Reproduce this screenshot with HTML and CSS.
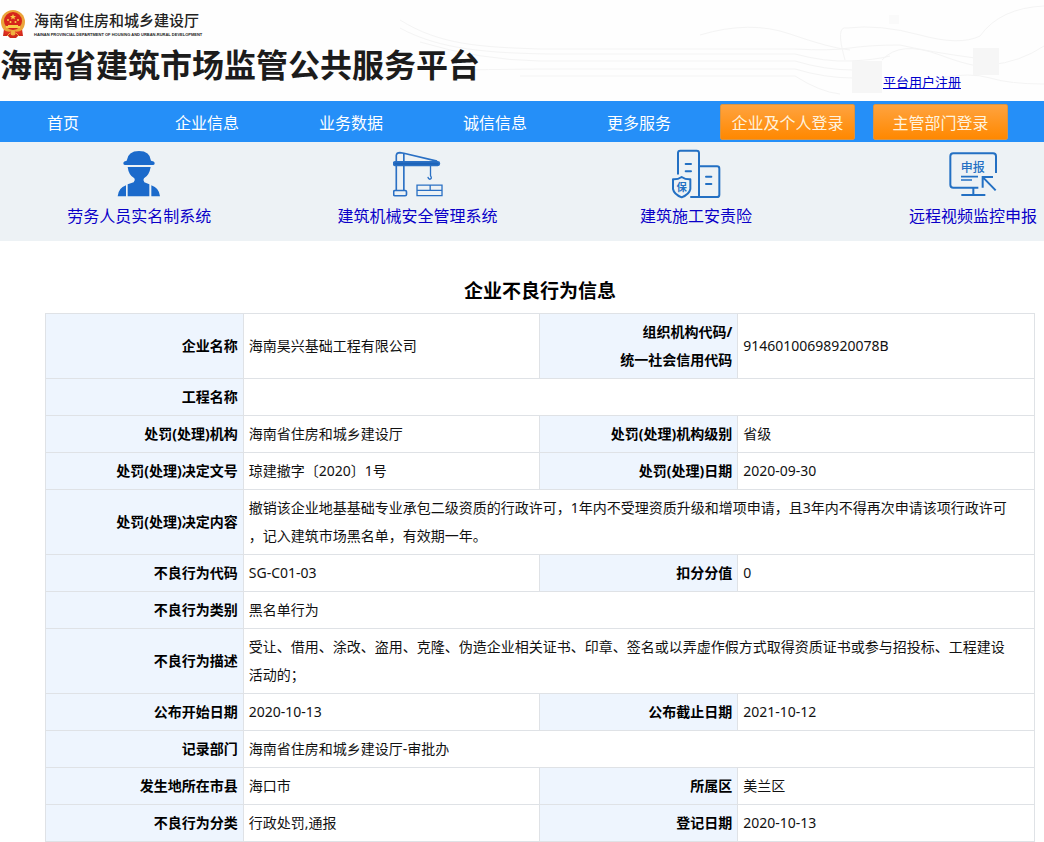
FILE: index.html
```html
<!DOCTYPE html>
<html lang="zh-CN">
<head>
<meta charset="utf-8">
<meta name="viewport" content="width=device-width, initial-scale=1">
<title>海南省建筑市场监管公共服务平台</title>
<link rel="stylesheet" href="styles.css">
</head>
<body>
<header class="header">
  <svg class="header-art" viewBox="0 0 644 101" aria-hidden="true">
    <g class="art-lines">
      <path d="M0 20C40 45 80 47 140 49H395Q430 51 450 48T500 45Q530 52 575 58"/>
      <path d="M0 28C40 50 90 53 150 54H395Q425 62 450 61T490 56"/>
      <path d="M20 42Q80 60 140 61H395Q425 70 453 70"/>
      <path d="M60 70Q120 69 160 69H395Q425 78 453 78"/>
      <path d="M120 76H395Q420 92 440 94"/>
      <path d="M300 35Q350 20 390 34T450 50"/>
      <path d="M445 60Q435 25 447 28Q480 24 520 35T580 36Q600 8 644 6"/>
      <path d="M482 60Q500 40 540 55T590 65Q620 62 644 46"/>
      <path d="M540 78Q570 72 590 78T644 84"/>
    </g>
    <rect class="art-block" x="452" y="61" width="30" height="32"/>
    <rect class="art-block" x="573" y="48" width="26" height="27"/>
    <rect class="art-faint" x="489" y="15" width="10" height="9"/>
  </svg>
  <div class="brand">
    <div class="department">
      <svg class="emblem" viewBox="0 0 26 30" role="img" aria-label="国徽">
        <path d="M4 20L3 27L8 27L10 29H16L18 27L23 27L22 20Z" fill="#cf2a1c"/>
        <circle cx="13" cy="13" r="12" fill="#eba43a"/>
        <circle cx="13" cy="12" r="9" fill="#d6261b"/>
        <path d="M13 5l.9 2h2.100l-1.700 1.400.6 2.100L13 9.300l-1.900 1.200.6-2.100L10 7h2.100z" fill="#f8cf4a"/>
        <g fill="#f8cf4a"><circle cx="8" cy="11" r="1"/><circle cx="10.500" cy="13" r="1"/><circle cx="15.500" cy="13" r="1"/><circle cx="18" cy="11" r="1"/>
        <path d="M8 16h10v1h2v2H6v-2h2z"/></g>
        <path d="M4 21Q8 24 13 22Q18 24 22 21L21 25Q17 24 13 26Q9 24 5 25Z" fill="#e33122"/>
        <circle cx="13" cy="24" r="2.500" fill="#f0b040"/>
        <path d="M7 27l3-3M19 27l-3-3" stroke="#f0b040"/>
      </svg>
      <div class="department-names">
        <span class="department-cn">海南省住房和城乡建设厅</span>
        <span class="department-en">HAINAN PROVINCIAL DEPARTMENT OF HOUSING AND URBAN-RURAL DEVELOPMENT</span>
      </div>
    </div>
    <h1 class="site-title">海南省建筑市场监管公共服务平台</h1>
  </div>
  <a class="register" href="#">平台用户注册</a>
</header>

<nav class="nav">
  <div class="nav-links">
    <a href="#">首页</a>
    <a href="#">企业信息</a>
    <a href="#">业务数据</a>
    <a href="#">诚信信息</a>
    <a href="#">更多服务</a>
  </div>
  <div class="nav-buttons">
    <button class="login" type="button">企业及个人登录</button>
    <button class="login" type="button">主管部门登录</button>
  </div>
</nav>

<section class="systems">
  <a class="system" href="#">
    <svg class="system-icon" viewBox="223 12 150 150" aria-hidden="true">
      <g fill="#1b6acb">
        <path d="M255 60Q250 58 251 53Q252 49 261 47Q265 18 298 18T334 47Q344 49 345 53Q346 58 341 60Z"/>
        <path d="M264 66H333Q329 91 313 100Q309 105 314 112L329 118V154H264V118L282 112Q288 105 284 100Q267 91 264 66Z"/>
        <path d="M259 121V154H234Q236 129 259 121ZM335 121V154H361Q359 129 335 121Z"/>
      </g>
    </svg>
    <span>劳务人员实名制系统</span>
  </a>
  <a class="system" href="#">
    <svg class="system-icon" viewBox="218 12 152 150" aria-hidden="true">
      <g fill="none" stroke="#2a70c4" stroke-width="5">
        <path d="M228 136V30Q229 22 239 22L251 24L352 48M251 24V136"/>
        <rect x="220" y="137" width="39" height="16" rx="4"/>
        <rect x="220" y="50" width="139" height="11" rx="5" fill="#1c63b8"/>
        <path stroke-width="4" d="M332 62V92Q338 102 330 103Q325 102 324 96"/>
        <path stroke-width="4" d="M291 121H367V153H291ZM291 137H367M331 121V137"/>
      </g>
    </svg>
    <span>建筑机械安全管理系统</span>
  </a>
  <a class="system" href="#">
    <svg class="system-icon" viewBox="210 12 150 150" aria-hidden="true">
      <g fill="none" stroke="#2370c3" stroke-width="6" stroke-linecap="round" stroke-linejoin="round">
        <path d="M231 86V24Q231 17 238 17H287Q294 17 294 24V156M294 64H348Q355 64 355 71V149Q355 156 348 156H270"/>
        <path d="M254 57H270M254 79H270M315 95H331M315 117H331"/>
        <path d="M242 96Q254 104 268 103V132Q265 148 242 157Q219 148 216 132V103Q230 104 242 96Z"/>
      </g>
      <text class="icon-text" x="242" y="137" font-size="31" font-weight="700">保</text>
    </svg>
    <span>建筑施工安责险</span>
  </a>
  <a class="system" href="#">
    <svg class="system-icon" viewBox="264 12 150 150" aria-hidden="true">
      <g fill="none" stroke="#2370c3" stroke-width="6">
        <path d="M355 128H280Q271 128 271 119V34Q271 25 280 25H399Q408 25 408 34V84"/>
        <path d="M304 150H376M340 128V150" />
        <path stroke-width="5" d="M303 95H354M303 105H336"/>
        <path d="M368 128V96H399M369 97L407 136"/>
      </g>
      <text class="icon-text" x="338" y="80" font-size="36" font-weight="500">申报</text>
    </svg>
    <span>远程视频监控申报</span>
  </a>
</section>

<main class="content">
  <h2 class="content-title">企业不良行为信息</h2>
  <table class="record">
    <colgroup><col class="col-label"><col class="col-value"><col class="col-label"><col class="col-value"></colgroup>
    <tbody>
      <tr><th scope="row">企业名称</th><td>海南昊兴基础工程有限公司</td><th scope="row">组织机构代码/<br>统一社会信用代码</th><td>91460100698920078B</td></tr>
      <tr><th scope="row">工程名称</th><td colspan="3"></td></tr>
      <tr><th scope="row">处罚(处理)机构</th><td>海南省住房和城乡建设厅</td><th scope="row">处罚(处理)机构级别</th><td>省级</td></tr>
      <tr><th scope="row">处罚(处理)决定文号</th><td>琼建撤字〔2020〕1号</td><th scope="row">处罚(处理)日期</th><td>2020-09-30</td></tr>
      <tr><th scope="row">处罚(处理)决定内容</th><td colspan="3">撤销该企业地基基础专业承包二级资质的行政许可，1年内不受理资质升级和增项申请，且3年内不得再次申请该项行政许可<br>，记入建筑市场黑名单，有效期一年。</td></tr>
      <tr><th scope="row">不良行为代码</th><td>SG-C01-03</td><th scope="row">扣分分值</th><td>0</td></tr>
      <tr><th scope="row">不良行为类别</th><td colspan="3">黑名单行为</td></tr>
      <tr><th scope="row">不良行为描述</th><td colspan="3">受让、借用、涂改、盗用、克隆、伪造企业相关证书、印章、签名或以弄虚作假方式取得资质证书或参与招投标、工程建设<br>活动的；</td></tr>
      <tr><th scope="row">公布开始日期</th><td>2020-10-13</td><th scope="row">公布截止日期</th><td>2021-10-12</td></tr>
      <tr><th scope="row">记录部门</th><td colspan="3">海南省住房和城乡建设厅-审批办</td></tr>
      <tr><th scope="row">发生地所在市县</th><td>海口市</td><th scope="row">所属区</th><td>美兰区</td></tr>
      <tr><th scope="row">不良行为分类</th><td>行政处罚,通报</td><th scope="row">登记日期</th><td>2020-10-13</td></tr>
    </tbody>
  </table>
</main>
</body>
</html>
```
FILE: styles.css
```css
* {
  box-sizing: border-box;
}

body {
  margin: 0;
  background: #fff;
  color: #111;
  font-family: "Noto Sans", "Noto Sans CJK SC", sans-serif;
  font-size: 14px;
}

.header {
  position: relative;
  display: flex;
  justify-content: space-between;
  min-height: 101px;
  padding: 9px 83px 9px 0;
  background: #fefefe;
  overflow: hidden;
}

.header-art {
  position: absolute;
  top: 0;
  right: 0;
  width: 644px;
  height: 101px;
}

.art-lines {
  fill: none;
  stroke: #f4f4f4;
}

.art-block {
  fill: #f6f6f6;
}

.art-faint {
  fill: #fafafa;
}

.brand {
  position: relative;
}

.department {
  display: flex;
  align-items: center;
  gap: 8px;
}

.emblem {
  width: 26px;
  height: 30px;
}

.department-names {
  display: flex;
  flex-direction: column;
  color: #222;
  white-space: nowrap;
}

.department-cn {
  font-size: 15px;
  font-weight: 500;
  line-height: 22px;
}

.department-en {
  font-family: "Liberation Sans", sans-serif;
  font-size: 4px;
  font-weight: 700;
  line-height: 8px;
}

.site-title {
  margin: 0;
  color: #1c1c1c;
  font-size: 32px;
  line-height: 52px;
  white-space: nowrap;
}

.register {
  position: relative;
  align-self: flex-end;
  color: #0000cc;
  font-size: 13px;
  line-height: 20px;
}

.nav {
  display: flex;
  align-items: center;
  gap: 49px;
  min-height: 41px;
  padding-left: 31px;
  background: #258ff8;
}

.nav-links {
  display: flex;
  gap: 80px;
}

.nav-links a {
  min-width: 64px;
  padding-top: 2px;
  color: #fff;
  font-size: 16px;
  line-height: 38px;
  text-align: center;
  text-decoration: none;
  white-space: nowrap;
}

.nav-buttons {
  display: flex;
  gap: 18px;
}

.login {
  width: 135px;
  height: 36px;
  padding: 0;
  border: 1px solid #d99545;
  border-radius: 2px;
  background: linear-gradient(#ffa33f, #ff8800);
  color: #fff3df;
  font-family: inherit;
  font-size: 16px;
}

.systems {
  display: grid;
  grid-template-columns: repeat(3, 4fr) 3fr;
  min-height: 99px;
  padding-top: 7px;
  background: #edf2f5;
}

.system {
  display: flex;
  flex-direction: column;
  align-items: center;
  color: #0a00c8;
  font-size: 16px;
  line-height: 34px;
  text-decoration: none;
  white-space: nowrap;
}

.system:last-child {
  justify-self: end;
  padding-right: 7px;
}

.system-icon {
  width: 50px;
  height: 50px;
}

.icon-text {
  fill: #2370c3;
  text-anchor: middle;
}

.content {
  padding: 30px 9px 0 45px;
}

.content-title {
  margin: 0 0 2px;
  color: #000;
  font-size: 19px;
  line-height: 40px;
  text-align: center;
}

.record {
  width: 100%;
  border-collapse: collapse;
  table-layout: fixed;
}

.col-label {
  width: 20%;
}

.col-value {
  width: 30%;
}

.record th,
.record td {
  height: 37px;
  padding: 4px 5px;
  border: 1px solid #dfe2e6;
  line-height: 28px;
}

.record th {
  background: #eef5fe;
  color: #000;
  font-weight: 700;
  text-align: right;
}

.record td {
  text-align: left;
}
```
